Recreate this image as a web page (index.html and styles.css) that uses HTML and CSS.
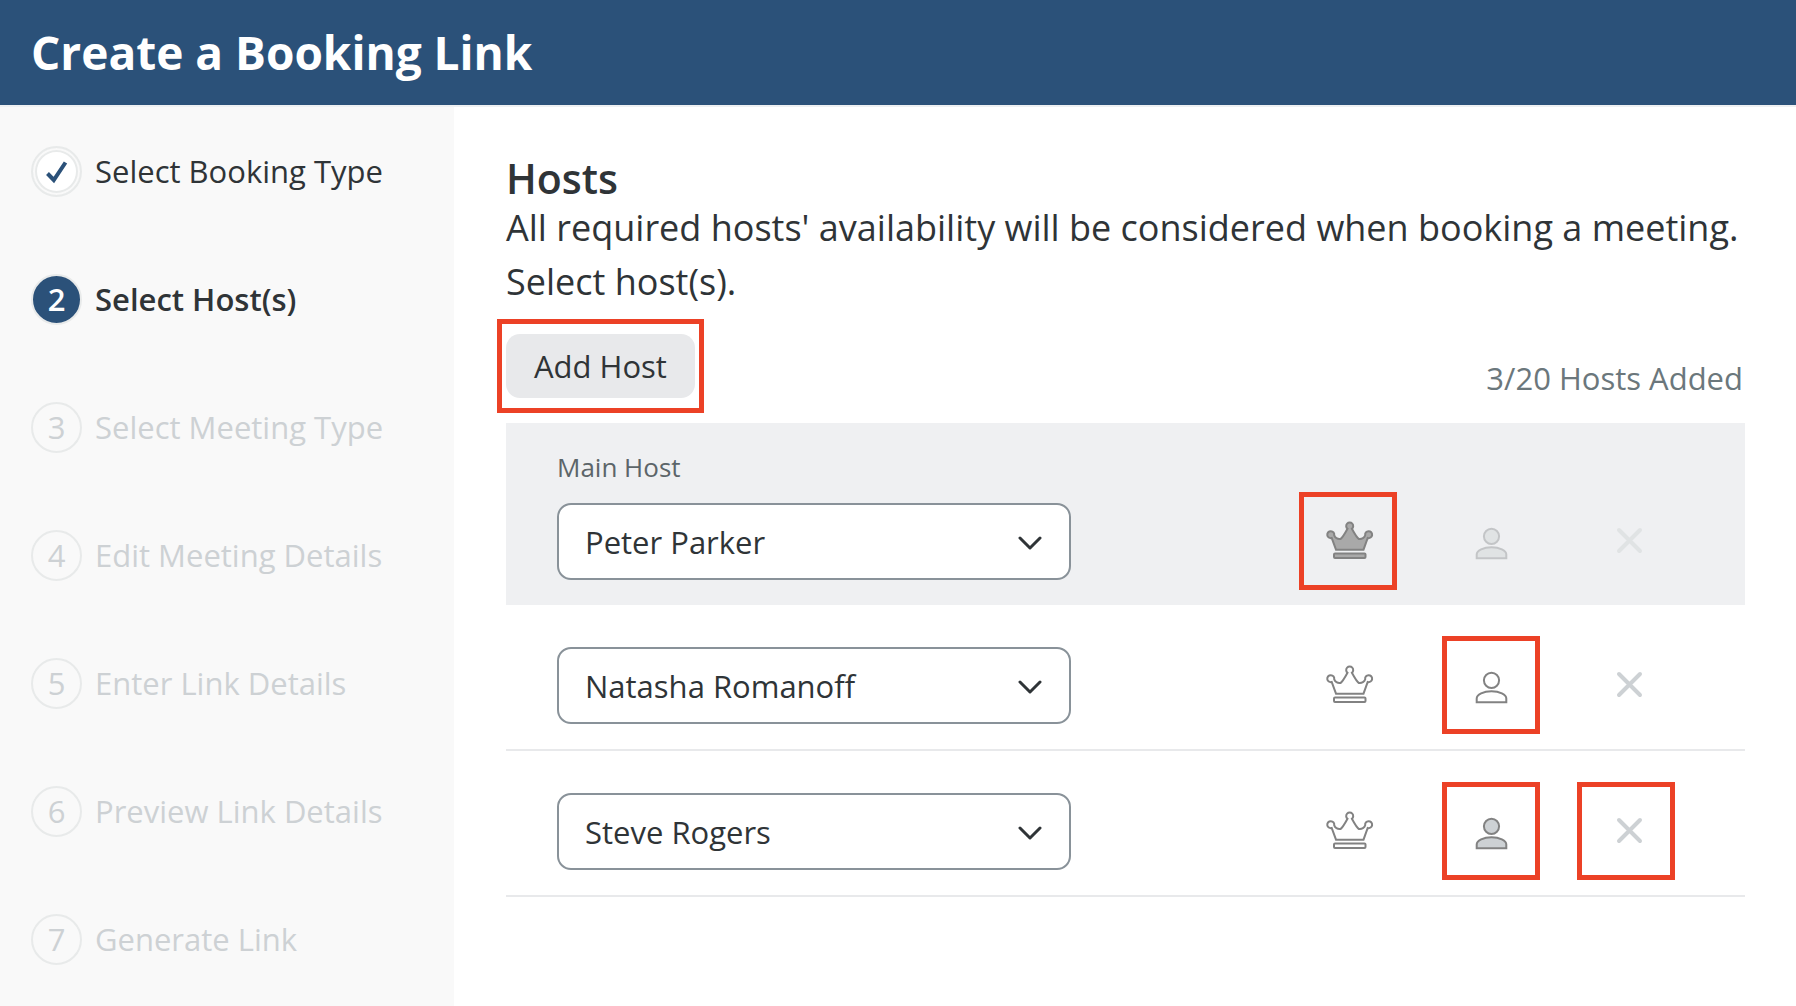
FILE: index.html
```html
<!DOCTYPE html>
<html lang="en">
<head>
    <meta charset="UTF-8">
    <meta name="viewport" content="width=device-width, initial-scale=1.0">
    <title>Create a Booking Link</title>
    <link rel="stylesheet" href="styles.css">
</head>
<body>
    <!-- shared icons -->
    <svg class="icon-defs" aria-hidden="true">
        <symbol id="crown" viewBox="0 0 52 52">
            <path d="M14 34.700 L9.700 23 A3.500 3.500 0 1 1 12.200 20.300 C12.800 22.500 15.500 24.500 18.500 24 C20.500 23 23.500 17.500 25.500 13.800 A3.500 3.500 0 1 1 29.900 13.800 C31.900 17.500 34.900 23 36.900 24 C39.900 24.500 42.600 22.500 43.200 20.300 A3.500 3.500 0 1 1 45.700 23 L41.500 34.700 Z"></path>
            <rect x="12" y="38.500" width="31.500" height="4.500" rx="1"></rect>
        </symbol>
        <symbol id="person" viewBox="0 0 52 52">
            <circle cx="26.500" cy="21.300" r="7.600"></circle>
            <path d="M11.700 43.200 V39.500 C11.700 35.500 18.500 32.200 26.500 32.200 S41.300 35.500 41.300 39.500 V43.200 Z"></path>
        </symbol>
        <symbol id="remove" viewBox="0 0 52 52">
            <path d="M19 15 L40 36 M40 15 L19 36"></path>
        </symbol>
        <symbol id="chevron" viewBox="0 0 24 14">
            <path d="M2 2 L12 12 L22 2"></path>
        </symbol>
    </svg>

    <header class="header">
        <h1>Create a Booking Link</h1>
    </header>

    <div class="layout">
        <nav class="sidebar">
            <ol class="steps">
                <li class="step done">
                    <span class="step-number">
                        <svg class="check" viewBox="0 0 24 24"><path d="M2.500 13.500 L8.800 20 L20.500 2.500"></path></svg>
                    </span>
                    <span>Select Booking Type</span>
                </li>
                <li class="step current"><span class="step-number">2</span><span>Select Host(s)</span></li>
                <li class="step"><span class="step-number">3</span><span>Select Meeting Type</span></li>
                <li class="step"><span class="step-number">4</span><span>Edit Meeting Details</span></li>
                <li class="step"><span class="step-number">5</span><span>Enter Link Details</span></li>
                <li class="step"><span class="step-number">6</span><span>Preview Link Details</span></li>
                <li class="step"><span class="step-number">7</span><span>Generate Link</span></li>
            </ol>
        </nav>

        <main class="content">
            <h2>Hosts</h2>
            <p class="intro">All required hosts' availability will be considered when booking a meeting. Select host(s).</p>

            <div class="toolbar">
                <div class="add-host-frame">
                    <button type="button" class="add-host">Add Host</button>
                </div>
                <span class="host-count">3/20 Hosts Added</span>
            </div>

            <div class="host main-host">
                <div class="field">
                    <label for="host1">Main Host</label>
                    <div class="select">
                        <select id="host1">
                            <option>Peter Parker</option>
                            <option>Natasha Romanoff</option>
                            <option>Steve Rogers</option>
                        </select>
                        <svg class="chevron"><use href="#chevron"></use></svg>
                    </div>
                </div>
                <div class="actions">
                    <button type="button" class="action crown filled framed" aria-label="Main host"><svg><use href="#crown"></use></svg></button>
                    <button type="button" class="action person filled muted" aria-label="Required host" disabled><svg><use href="#person"></use></svg></button>
                    <button type="button" class="action remove muted" aria-label="Remove host" disabled><svg><use href="#remove"></use></svg></button>
                </div>
            </div>

            <div class="host">
                <div class="field">
                    <div class="select">
                        <select id="host2" aria-label="Host 2">
                            <option>Natasha Romanoff</option>
                            <option>Peter Parker</option>
                            <option>Steve Rogers</option>
                        </select>
                        <svg class="chevron"><use href="#chevron"></use></svg>
                    </div>
                </div>
                <div class="actions">
                    <button type="button" class="action crown" aria-label="Make main host"><svg><use href="#crown"></use></svg></button>
                    <button type="button" class="action person framed" aria-label="Optional host"><svg><use href="#person"></use></svg></button>
                    <button type="button" class="action remove" aria-label="Remove host"><svg><use href="#remove"></use></svg></button>
                </div>
            </div>

            <div class="host">
                <div class="field">
                    <div class="select">
                        <select id="host3" aria-label="Host 3">
                            <option>Steve Rogers</option>
                            <option>Peter Parker</option>
                            <option>Natasha Romanoff</option>
                        </select>
                        <svg class="chevron"><use href="#chevron"></use></svg>
                    </div>
                </div>
                <div class="actions">
                    <button type="button" class="action crown" aria-label="Make main host"><svg><use href="#crown"></use></svg></button>
                    <button type="button" class="action person filled framed" aria-label="Required host"><svg><use href="#person"></use></svg></button>
                    <button type="button" class="action remove framed" aria-label="Remove host"><svg><use href="#remove"></use></svg></button>
                </div>
            </div>
        </main>
    </div>
</body>
</html>
```
FILE: styles.css
```css
* {
    box-sizing: border-box;
}
body {
    margin: 0;
    min-height: 100vh;
    display: flex;
    flex-direction: column;
    font-family: "Open Sans", sans-serif;
    font-size: 31px;
    color: #2f3437;
    background-color: #fff;
}
h1, h2, p, ol {
    margin: 0;
    padding: 0;
}
button, select {
    font: inherit;
    color: inherit;
    cursor: pointer;
}
.icon-defs {
    display: none;
}

.header {
    background-color: #2b5179;
    color: #fff;
    padding: 20px 31px;
    border-bottom: 2px solid #eef0f2;
}
.header h1 {
    font-size: 46px;
    line-height: 65px;
    font-weight: 700;
}

.layout {
    flex: 1;
    display: flex;
}

/* steps */
.sidebar {
    flex: 0 0 454px;
    background-color: #f9f9f9;
    padding: 39px 31px 0;
}
.steps {
    list-style: none;
    display: flex;
    flex-direction: column;
    gap: 77px;
}
.step {
    display: flex;
    align-items: center;
    gap: 13px;
    line-height: 51px;
    color: #cdd1d4;
    white-space: nowrap;
}
.step-number {
    flex: none;
    display: flex;
    align-items: center;
    justify-content: center;
    width: 51px;
    height: 51px;
    border: 2px solid #e8eaea;
    border-radius: 50%;
}
.step.done {
    color: #2f3437;
}
.step.done .step-number {
    background-color: #fff;
    box-shadow: inset 0 0 0 2px #f9f9f9, inset 0 0 0 4px #e8eaea;
}
.check {
    width: 24px;
    height: 24px;
    fill: none;
    stroke: #2b5179;
    stroke-width: 4;
}
.step.current {
    color: #2f3437;
    font-weight: 600;
}
.step.current .step-number {
    background-color: #2b5179;
    color: #fff;
}

/* hosts */
.content {
    flex: 1;
    padding: 48px 51px 48px 52px;
}
.content h2 {
    font-size: 41px;
    line-height: 46px;
    font-weight: 600;
}
.intro {
    font-size: 36px;
    line-height: 54px;
}
.toolbar {
    display: flex;
    justify-content: space-between;
    align-items: flex-end;
    margin: 10px 0 10px -9px;
}
.add-host-frame {
    border: 5px solid #ec4126;
    padding: 10px 4px;
}
.add-host {
    display: block;
    border: none;
    border-radius: 14px;
    background-color: #e8e9eb;
    padding: 0 28px;
    line-height: 64px;
}
.host-count {
    color: #6b777c;
    line-height: 48px;
    padding: 0 2px 11px;
}

.host {
    display: flex;
    justify-content: space-between;
    align-items: flex-end;
    padding: 31px 70px 15px 51px;
    border-bottom: 2px solid #e8e9eb;
}
.main-host {
    background-color: #eff0f2;
    border-bottom: none;
    padding-top: 24px;
}
.field {
    flex: 0 1 514px;
    margin-bottom: 10px;
}
.field label {
    display: block;
    font-size: 26px;
    line-height: 40px;
    margin-bottom: 16px;
    color: #5c6569;
}
.select {
    position: relative;
}
.select select {
    display: block;
    appearance: none;
    width: 100%;
    height: 77px;
    border: 2px solid #899299;
    border-radius: 14px;
    background-color: #fff;
    padding: 0 64px 0 26px;
}
.chevron {
    position: absolute;
    right: 29px;
    top: 33px;
    width: 24px;
    height: 14px;
    fill: none;
    stroke: #2f3437;
    stroke-width: 3;
    stroke-linecap: round;
    stroke-linejoin: round;
    pointer-events: none;
}

.actions {
    display: flex;
    gap: 37px;
}
.action {
    display: flex;
    align-items: center;
    justify-content: center;
    width: 98px;
    height: 98px;
    padding: 0;
    border: 5px solid transparent;
    background: none;
}
.action.crown {
    margin-right: 8px;
}
.action.framed {
    border-color: #ec4126;
}
.action svg {
    width: 52px;
    height: 52px;
    fill: none;
    stroke: #828282;
    stroke-width: 2;
}
.action.crown.filled svg {
    fill: #a9a9a9;
}
.action.person.filled svg {
    fill: #cdd1d4;
}
.action.person.muted svg {
    fill: #e0e3e4;
    stroke: #c3c5c7;
}
.action.remove svg {
    stroke: #cdd1d4;
    stroke-width: 4;
    stroke-linecap: round;
}
.action.remove.muted svg {
    stroke: #e0e3e4;
}
```
